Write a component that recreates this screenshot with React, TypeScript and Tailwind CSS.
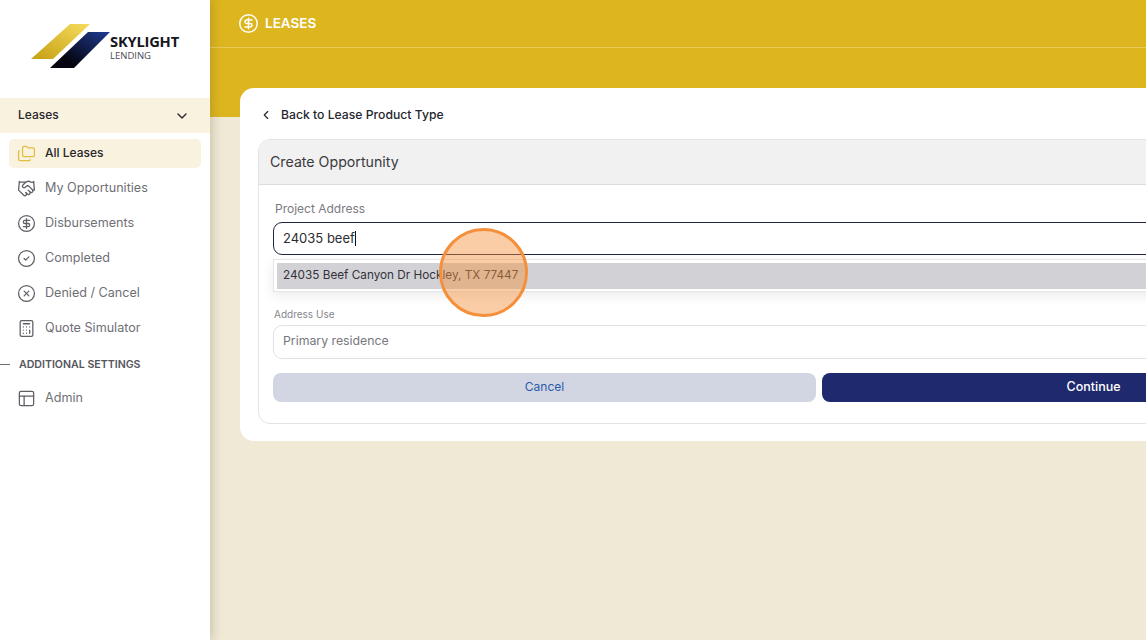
import React from 'react';
import {
    Calculator,
    ChevronDown,
    ChevronLeft,
    CircleCheck,
    CircleDollarSign,
    CircleX,
    Folders,
    Handshake,
    PanelsTopLeft,
} from 'lucide-react';

const font = { fontFamily: '"Inter", "Open Sans", sans-serif' };

const navItems = [
    { label: 'My Opportunities', icon: Handshake },
    { label: 'Disbursements', icon: CircleDollarSign },
    { label: 'Completed', icon: CircleCheck },
    { label: 'Denied / Cancel', icon: CircleX },
    { label: 'Quote Simulator', icon: Calculator },
];

const Logo = () => (
    <div className="flex h-[98px] pl-[30px] pt-[24px] bg-white">
        <svg width="80" height="44" viewBox="0 0 80 44" className="shrink-0">
            <defs>
                <linearGradient id="gold" x1="0" y1="1" x2="1" y2="0">
                    <stop offset="0.1" stopColor="#c9a51a" />
                    <stop offset="1" stopColor="#f6dc5e" />
                </linearGradient>
                <linearGradient id="navy" x1="0" y1="1" x2="1" y2="0">
                    <stop offset="0.25" stopColor="#05060f" />
                    <stop offset="1" stopColor="#1f3b93" />
                </linearGradient>
            </defs>
            <polygon points="40,0 60,0 23,35 1,35" fill="url(#gold)" />
            <polygon points="58,8 80,8 44,44 20,44" fill="url(#navy)" />
        </svg>
        <div className="pt-[9px] leading-none">
            <div className="text-[14.7px] font-bold leading-[16px] tracking-[-0.2px] text-[#16161d]" style={{ fontFamily: '"Open Sans", sans-serif' }}>
                SKYLIGHT
            </div>
            <div className="text-[9.5px] leading-[14px] text-[#4b4b52]" style={{ fontFamily: '"Open Sans", sans-serif' }}>
                LENDING
            </div>
        </div>
    </div>
);

const Sidebar = () => (
    <aside className="relative z-10 flex w-[210px] shrink-0 flex-col bg-white shadow-[2px_0_10px_rgba(80,70,40,0.25)]">
        <Logo />
        <div className="flex h-[35px] items-center justify-between bg-[#f9f2df] pl-[18px] pr-[20px] text-[12px] font-medium text-[#26262c]">
            <span className="pb-[1px]">Leases</span>
            <ChevronDown size={16} strokeWidth={2} />
        </div>
        <div className="mt-[6px] flex flex-col px-[9px]">
            <div className="flex h-[29px] items-center gap-[9px] rounded-[5px] bg-[#f9f2df] pl-[8px] text-[12px] font-medium text-[#26262c]">
                <Folders size={19} strokeWidth={1.6} className="text-[#e3bd3f]" />
                <span className="pb-[1px]">All Leases</span>
            </div>
            {navItems.map(item => (
                <div key={item.label} className="mt-[6px] flex h-[29px] items-center gap-[9px] pl-[8px] text-[12.6px] text-[#6f6f76]">
                    <item.icon size={19} strokeWidth={1.6} className="text-[#5f5f66]" />
                    <span className="pb-[1px]">{item.label}</span>
                </div>
            ))}
        </div>
        <div className="mt-[14px] flex h-[15px] items-center">
            <div className="h-[1px] w-[10px] bg-[#6f6f76]"></div>
            <span className="ml-[9px] text-[10.6px] font-semibold text-[#55555c]">ADDITIONAL SETTINGS</span>
        </div>
        <div className="mt-[12px] flex h-[29px] items-center gap-[9px] pl-[17px] text-[12.6px] text-[#6f6f76]">
            <PanelsTopLeft size={19} strokeWidth={1.6} className="text-[#5f5f66]" />
            <span className="pb-[1px]">Admin</span>
        </div>
    </aside>
);

const App: React.FC = () => {
    return (
        <div className="relative flex h-[640px] w-[1146px] overflow-hidden bg-[#efe9d5]" style={font}>
            <Sidebar />
            <main className="min-w-0 flex-1">
                <div className="h-[117px] bg-[#ddb61f]">
                    <div className="flex h-[48px] items-center gap-[6px] border-b border-[#e8cb5c] pl-[28px] text-[13.5px] font-semibold text-white">
                        <CircleDollarSign size={21} strokeWidth={1.7} />
                        <span>LEASES</span>
                    </div>
                </div>

                <div className="ml-[30px] mt-[-29px] w-[1160px] rounded-[14px] bg-white px-[18px] pb-[17px]">
                    <div className="flex h-[51px] items-center gap-[8px] pl-[1px] pt-[3px] text-[12.2px] font-medium text-[#26262c]">
                        <ChevronLeft size={14} strokeWidth={2} />
                        <span>Back to Lease Product Type</span>
                    </div>

                    <div className="h-[285px] overflow-hidden rounded-[12px] border border-[#e4e4e7]">
                        <div className="flex h-[45px] items-center border-b border-[#dcdce0] bg-[#f1f1f1] pl-[11px] text-[14.2px] text-[#3a3a40]">
                            Create Opportunity
                        </div>
                        <div className="px-[14px] pt-[16px]">
                            <div className="h-[16px] pl-[2px] text-[12px] leading-[16px] text-[#7a7a80]">Project Address</div>
                            <div className="mt-[5px] flex h-[33px] items-center rounded-[9px] border border-[#1f2544] pl-[9px] text-[13px] text-[#2c2c32]">
                                24035 beef
                                <span className="h-[15px] w-[1px] bg-[#111118]"></span>
                            </div>
                            <div className="mt-[4px] h-[33px] border border-[#e6e6ea] p-[3px] shadow-[0_4px_12px_rgba(0,0,0,0.08)]">
                                <div className="flex h-[26px] items-center bg-[#d1d1d6] pl-[6px] text-[11.75px] text-[#33333a]">
                                    <span>24035 Beef Canyon Dr Hockley, TX 77447</span>
                                </div>
                            </div>
                            <div className="mt-[16px] h-[12px] pl-[1px] text-[10px] leading-[12px] text-[#85858b]">Address Use</div>
                            <div className="mt-[5px] flex h-[34px] items-center rounded-[9px] border border-[#e2e2e6] pl-[9px] text-[12.3px] text-[#77777d]">
                                <span className="pb-[1px]">Primary residence</span>
                            </div>
                            <div className="mt-[14px] flex gap-[6px]">
                                <button className="h-[29px] w-[543px] rounded-[8px] bg-[#d2d6e3] pb-[1px] text-[12px] text-[#2a5aa8]">Cancel</button>
                                <button className="h-[29px] w-[543px] rounded-[8px] bg-[#1f2a6e] pb-[1px] text-[12.5px] font-medium text-white">Continue</button>
                            </div>
                        </div>
                    </div>
                </div>
            </main>

            <div className="absolute left-[439px] top-[228px] z-20 h-[89px] w-[89px] rounded-full border-[3px] border-[#f4903c] bg-[#f4903c]/45"></div>
        </div>
    );
};

export default App;
